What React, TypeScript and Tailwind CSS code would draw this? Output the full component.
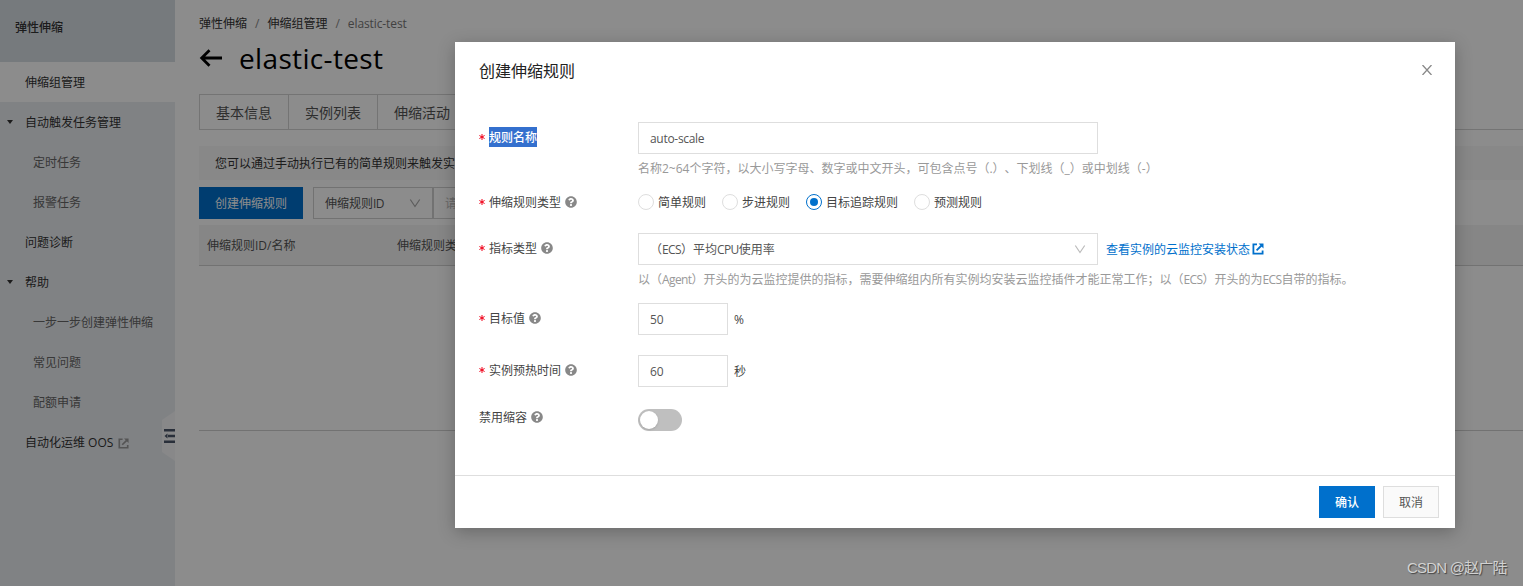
import React from "react";
import { FaQuestionCircle } from "react-icons/fa";

function Help() {
  return <FaQuestionCircle className="ml-1 size-3 shrink-0 text-[#888]" />;
}

function Chevron({ className }: { className: string }) {
  return (
    <svg viewBox="0 0 12 12" className={className} fill="none" stroke="currentColor" strokeWidth="1.2">
      <path d="M1.3 1.5 L6 8.5 L10.7 1.5" />
    </svg>
  );
}

function External({ className }: { className: string }) {
  return (
    <svg viewBox="0 0 12 12" className={className} fill="none" stroke="currentColor" strokeWidth="1.8">
      <path d="M5 1.4H1.4V10.6H10.6V7.5" />
      <path d="M4.6 7.4 L9.5 2.5" />
      <path d="M6.6 0.5H11.5V5.4Z" fill="currentColor" stroke="none" />
    </svg>
  );
}

function NavItem({ text, level = 1, caret = false, active = false, external = false }: { text: string; level?: number; caret?: boolean; active?: boolean; external?: boolean }) {
  return (
    <div className={`flex h-10 items-center pt-[2px] whitespace-nowrap ${active ? "bg-white" : ""} ${level === 2 ? "pl-[33px] text-[#666]" : caret ? "pl-[7px] text-[#333]" : "pl-[25px] text-[#333]"}`}>
      {caret && (
        <svg viewBox="0 0 6 4" className="mr-3 mb-[2px] h-[4px] w-[6px] shrink-0" fill="currentColor">
          <path d="M0 0H6L3 4Z" />
        </svg>
      )}
      <span>{text}</span>
      {external && <External className="ml-[5px] size-[11px] text-[#999]" />}
    </div>
  );
}

function Label({ text, required = true, help = true, selected = false, className = "h-8" }: { text: string; required?: boolean; help?: boolean; selected?: boolean; className?: string }) {
  return (
    <div className={`flex w-[159px] shrink-0 items-center ${className}`}>
      {required && (
        <svg viewBox="0 0 6 6" className="mr-1 size-[6px]" stroke="#f00018" strokeWidth="1">
          <path d="M3 0V6M0.4 1.5L5.6 4.5M0.4 4.5L5.6 1.5" />
        </svg>
      )}
      <span className={selected ? "h-5 bg-[#3470ce] pt-px leading-5 font-medium text-white" : "pt-[2px]"}>{text}</span>
      {help && <Help />}
    </div>
  );
}

function Radio({ text, checked = false }: { text: string; checked?: boolean }) {
  return (
    <div className="flex items-center">
      <span className={`mr-1 flex size-4 items-center justify-center rounded-full border ${checked ? "border-[#0070cc]" : "border-[#dedede]"}`}>
        {checked && <span className="size-2 rounded-full bg-[#0070cc]" />}
      </span>
      <span className="pt-[2px]">{text}</span>
    </div>
  );
}

function Latin({ children }: { children: string }) {
  return <span className="tracking-[-0.6px]">{children}</span>;
}

const inputBox = "flex h-8 items-center border border-[#dedede] pt-[2px] pl-[11px] text-[#555]";

export default function App() {
  return (
    <div className="relative h-[586px] w-[1523px] overflow-hidden bg-white font-['Open_Sans','Noto_Sans_CJK_SC',sans-serif] text-xs text-[#333] [text-spacing-trim:space-all]">
      <div className="flex h-full">
        <aside className="relative w-[175px] shrink-0 bg-[#eaedf1]">
          <div className="flex h-[62px] items-center bg-[#d7dee4] pb-[6px] pl-[15px] font-medium text-[#333]">弹性伸缩</div>
          <NavItem text="伸缩组管理" active />
          <NavItem text="自动触发任务管理" caret />
          <NavItem text="定时任务" level={2} />
          <NavItem text="报警任务" level={2} />
          <NavItem text="问题诊断" />
          <NavItem text="帮助" caret />
          <NavItem text="一步一步创建弹性伸缩" level={2} />
          <NavItem text="常见问题" level={2} />
          <NavItem text="配额申请" level={2} />
          <NavItem text="自动化运维 OOS" external />
          <svg viewBox="0 0 13 50" className="absolute top-[411px] right-0 h-[50px] w-[13px]">
            <path d="M13 0L0 9V41L13 50Z" fill="#f7f8f9" />
            <path d="M2 19.2H13M6 25H13M2 30.8H13" stroke="#4b566a" strokeWidth="2.4" />
            <path d="M2.5 25L5.5 22.5V27.5Z" fill="#4b566a" />
          </svg>
        </aside>
        <main className="min-w-0 flex-1 pl-6">
          <div className="flex h-[45px] items-center pt-[2px] whitespace-nowrap">
            <span className="text-[#333]">弹性伸缩</span>
            <span className="mx-2 text-[#888]">/</span>
            <span className="text-[#333]">伸缩组管理</span>
            <span className="mx-2 text-[#888]">/</span>
            <span className="tracking-[-0.1px] text-[#777]">elastic-test</span>
          </div>
          <div className="flex h-[49px] items-start text-black">
            <svg viewBox="0 0 24 18" className="mt-[4px] h-[18px] w-6" fill="none" stroke="currentColor" strokeWidth="2.8">
              <path d="M23 9H3M10.5 1.2L2.7 9L10.5 16.8" />
            </svg>
            <h1 className="-mt-px ml-4 text-[28px] leading-7 tracking-[0.35px]">elastic-test</h1>
          </div>
          <div className="flex h-9 border-b border-[#d4d4d4]">
            <div className="flex h-9 shrink-0 border border-[#d4d4d4] text-sm text-[#555]">
              {["基本信息", "实例列表", "伸缩活动", "伸缩规则"].map((t, i) => (
                <div key={t} className={`flex items-center justify-center pt-px ${i ? "w-[89px] border-l border-[#d4d4d4]" : "w-[88px]"}`}>{t}</div>
              ))}
            </div>
          </div>
          <div className="mt-4 flex h-[34px] items-center bg-[#f7f7f7] pt-[2px] pl-4 text-[#333]">您可以通过手动执行已有的简单规则来触发实例的弹性伸缩。</div>
          <div className="mt-[7px] flex h-8">
            <button className="mr-[10px] w-[104px] bg-[#0070cc] pt-[2px] text-white">创建伸缩规则</button>
            <div className="flex w-[120px] items-center justify-between border border-[#d0d0d0] pt-[2px] pr-[11px] pl-[11px] text-[#555]">
              <span>伸缩规则<Latin>ID</Latin></span>
              <Chevron className="size-3 text-[#aaa]" />
            </div>
            <div className="flex w-[200px] items-center border border-[#d0d0d0] pt-[2px] pl-[11px] text-[#bbb]">请输入</div>
          </div>
          <div className="mt-[6px] flex h-[41px] items-center border-b border-[#d0d0d0] bg-[#f5f5f5] pt-[2px] pl-2 text-[#555]">
            <span className="w-[190px]">伸缩规则ID/名称</span>
            <span>伸缩规则类型</span>
          </div>
          <div className="h-[165px] border-b border-[#d0d0d0]" />
        </main>
      </div>

      <div className="absolute inset-0 bg-black/45" />

      <section className="absolute top-[42px] left-[455px] flex h-[486px] w-[1000px] flex-col bg-white text-[#444] shadow-[0_4px_16px_rgba(0,0,0,0.25)]">
        <header className="flex h-20 items-start justify-between pr-[23px] pl-6">
          <h2 className="mt-[17px] text-base leading-6 text-[#222]">创建伸缩规则</h2>
          <svg viewBox="0 0 10 10" className="mt-[23px] size-[10px]" stroke="#888" strokeWidth="1.3">
            <path d="M0.5 0L9.5 10M9.5 0L0.5 10" />
          </svg>
        </header>
        <div className="flex flex-1 flex-col pl-6 whitespace-nowrap">
          <div className="flex h-[64px]">
            <Label text="规则名称" help={false} selected className="h-[30px]" />
            <div>
              <div className={`${inputBox} w-[460px] tracking-[-0.3px]`}>auto-scale</div>
              <p className="mt-1 pt-px leading-5 text-[#999]">名称2~64个字符，以大小写字母、数字或中文开头，可包含点号（.）、下划线（_）或中划线（-）</p>
            </div>
          </div>
          <div className="flex h-[47px]">
            <Label text="伸缩规则类型" />
            <div className="flex h-8 items-center gap-4">
              <Radio text="简单规则" />
              <Radio text="步进规则" />
              <Radio text="目标追踪规则" checked />
              <Radio text="预测规则" />
            </div>
          </div>
          <div className="flex h-[70px]">
            <Label text="指标类型" className="h-[30px]" />
            <div>
              <div className="flex items-center">
                <div className={`${inputBox} w-[460px] justify-between pr-[11px]`}>
                  <span>（<Latin>ECS</Latin>）平均<Latin>CPU</Latin>使用率</span>
                  <Chevron className="size-3 text-[#bbb]" />
                </div>
                <a className="ml-2 flex items-center text-[#0070cc]">
                  <span className="pt-[2px]">查看实例的云监控安装状态</span>
                  <External className="ml-[2px] size-[12px]" />
                </a>
              </div>
              <p className="mt-1 pt-px leading-5 text-[#999]">以（<Latin>Agent</Latin>）开头的为云监控提供的指标，需要伸缩组内所有实例均安装云监控插件才能正常工作；以（<Latin>ECS</Latin>）开头的为<Latin>ECS</Latin>自带的指标。</p>
            </div>
          </div>
          <div className="flex h-[52px]">
            <Label text="目标值" className="h-[30px]" />
            <div className={`${inputBox} w-[90px]`}>50</div>
            <span className="ml-[6px] pt-px leading-8">%</span>
          </div>
          <div className="flex h-[54px]">
            <Label text="实例预热时间" className="h-[30px]" />
            <div className={`${inputBox} w-[90px]`}>60</div>
            <span className="ml-[6px] pt-px leading-8">秒</span>
          </div>
          <div className="flex">
            <Label text="禁用缩容" required={false} className="h-4" />
            <div className="flex h-[22px] w-11 items-center rounded-full bg-[#bfbfbf] px-[2px]">
              <span className="size-[18px] rounded-full bg-white shadow-sm" />
            </div>
          </div>
        </div>
        <footer className="flex h-[53px] items-center justify-end gap-2 border-t border-[#dedede] pr-4">
          <button className="h-8 w-14 bg-[#0070cc] pt-[2px] font-medium text-white">确认</button>
          <button className="h-8 w-14 border border-[#dedede] bg-[#fafafa] pt-[2px] text-[#555]">取消</button>
        </footer>
      </section>

      <div className="absolute top-[557px] left-[1407px] font-['Liberation_Sans','Noto_Sans_CJK_SC',sans-serif] text-[15px] leading-[22px] tracking-[-0.8px] whitespace-nowrap text-[#d2d2d2] [text-shadow:1px_1px_1px_#444]">CSDN @赵广陆</div>
    </div>
  );
}
